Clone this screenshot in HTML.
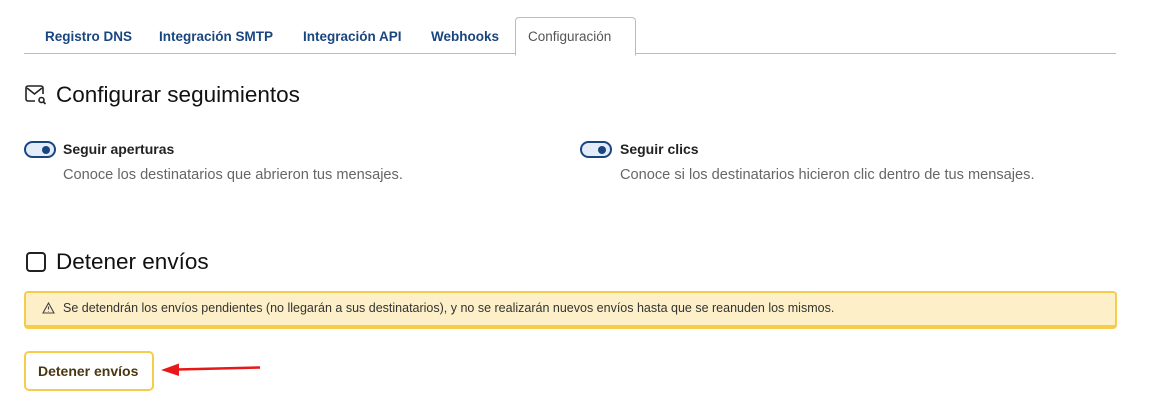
<!DOCTYPE html>
<html><head><meta charset="utf-8"><style>
body{margin:0;width:1157px;height:418px;background:#fff;font-family:"Liberation Sans",sans-serif;position:relative;overflow:hidden}
.a{position:absolute;white-space:nowrap}
.tab{position:absolute;top:29px;font-size:13.5px;font-weight:bold;color:#1a4680}
.sw{position:absolute;width:28px;height:13px;border:2px solid #1a4680;border-radius:10px;background:#e3ecf8}
.sw:after{content:"";position:absolute;right:4px;top:2.5px;width:8px;height:8px;border-radius:50%;background:#1a4680}
.lb{font-size:14px;font-weight:bold;color:#222}
.ds{font-size:14.6px;color:#666}
h2{margin:0;font-weight:normal;font-size:22.5px;color:#111}
</style></head><body>
<div class="a" style="left:24px;top:53px;width:1092px;height:1px;background:#bbb"></div>
<div class="a" style="left:515px;top:17px;width:119px;height:37px;border:1px solid #bbb;border-bottom:1px solid #fff;border-radius:4px 4px 0 0;background:#fff"></div>
<span class="tab" style="left:45px">Registro DNS</span>
<span class="tab" style="left:159px">Integración SMTP</span>
<span class="tab" style="left:303px">Integración API</span>
<span class="tab" style="left:431px">Webhooks</span>
<span class="tab" style="left:528px;color:#555;font-weight:normal">Configuración</span>
<svg class="a" style="left:24px;top:84px" width="24" height="22" viewBox="0 0 24 22" fill="none" stroke="#222" stroke-width="1.6"><path d="M11 17H4a2 2 0 0 1-2-2V4a2 2 0 0 1 2-2h13a2 2 0 0 1 2 2v6"/><path d="M3 4l7.5 6L18 4"/><circle cx="17.5" cy="16" r="2.5"/><path d="M19.5 18l2 2"/></svg>
<h2 class="a" style="left:56px;top:82px">Configurar seguimientos</h2>
<div class="sw" style="left:24px;top:141px"></div>
<span class="a lb" style="left:63px;top:141px">Seguir aperturas</span>
<span class="a ds" style="left:63px;top:167px">Conoce los destinatarios que abrieron tus mensajes.</span>
<div class="sw" style="left:580px;top:141px"></div>
<span class="a lb" style="left:620px;top:141px">Seguir clics</span>
<span class="a ds" style="left:620px;top:167px">Conoce si los destinatarios hicieron clic dentro de tus mensajes.</span>
<div class="a" style="left:26px;top:252px;width:16px;height:16px;border:2px solid #222;border-radius:4px"></div>
<h2 class="a" style="left:56px;top:249px">Detener envíos</h2>
<div class="a" style="left:24px;top:291px;width:1089px;height:32px;background:#fdf0c8;border:2px solid #f6cd4a;border-bottom-width:4px;border-radius:4px"></div>
<svg class="a" style="left:42px;top:302px" width="13" height="12" viewBox="0 0 13 12" fill="none" stroke="#444" stroke-width="1.1"><path d="M6.5 1L12 11H1z"/><path d="M6.5 4.5v3M6.5 9v.5"/></svg>
<span class="a" style="left:63px;top:301px;font-size:12.5px;color:#333">Se detendrán los envíos pendientes (no llegarán a sus destinatarios), y no se realizarán nuevos envíos hasta que se reanuden los mismos.</span>
<div class="a" style="left:24px;top:351px;width:126px;height:36px;border:2px solid #f6cd4a;border-radius:5px"></div>
<span class="a" style="left:38px;top:363px;font-size:14px;font-weight:bold;color:#4a3810">Detener envíos</span>
<svg class="a" style="left:155px;top:358px" width="112" height="22"><path d="M105 9.5L22 11.5" stroke="#e81818" stroke-width="2.5"/><path d="M6 12L24 5.5L24 18z" fill="#e81818"/></svg>
</body></html>
